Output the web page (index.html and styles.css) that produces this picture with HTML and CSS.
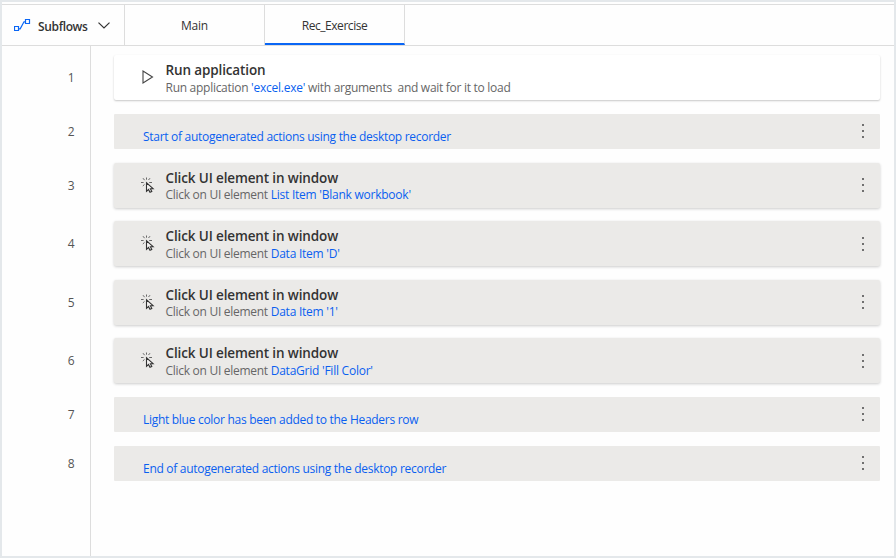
FILE: index.html
```
<!DOCTYPE html>
<html lang="en">
<head>
<meta charset="utf-8">
<title>Subflows</title>
<link rel="stylesheet" href="styles.css">
</head>
<body>
<svg class="defs" aria-hidden="true">
  <symbol id="click" viewBox="0 0 14 16">
    <path d="M5.5 5.8v8.5l2-1.8 1.5 2.8 1.8-.9-1.4-2.7h2.7z" fill="#f5f4f3" stroke="#333" stroke-width="1.1"/>
    <path d="M5.5 0.5v2.2M2 1.2l1.6 2M9 1.2L7.5 3M0 5.5h2.6M8.2 5.5H11M3.5 7.4L1.8 9" fill="none" stroke="#666" stroke-width="1"/>
  </symbol>
</svg>
<div class="window">
  <header class="tabs">
    <div class="subflows">
      <svg class="flow-icon" width="17" height="13" viewBox="0 0 17 13"><g fill="none" stroke="#0a66f5"><path d="M.5 7.5h4v4h-4zM11.5.5h4v4h-4z" stroke-width="1.2"/><path d="M5 9.8h1.2l3.8-7h1.5" stroke-width="1.2"/></g></svg>
      <span>Subflows</span>
      <svg class="chevron" width="12" height="7" viewBox="0 0 12 7"><path d="M.5.6L6 6 11.5.6" fill="none" stroke="#333" stroke-width="1.2"/></svg>
    </div>
    <div class="tab">Main</div>
    <div class="tab active">Rec_Exercise</div>
  </header>
  <main class="flow">
    <div class="numbers">
      <span>1</span><span class="short">2</span><span>3</span><span>4</span><span>5</span><span>6</span><span class="short">7</span><span class="short">8</span>
    </div>
    <div class="actions">
      <section class="card white">
        <svg class="play" width="12" height="14" viewBox="0 0 12 14"><path d="M1 1v12l9.5-6z" fill="none" stroke="#444" stroke-width="1.1"/></svg>
        <div class="copy"><h2>Run application</h2><p>Run application <b>'excel.exe'</b> with arguments&nbsp; and wait for it to load</p></div>
      </section>
      <section class="note"><p>Start of autogenerated actions using the desktop recorder</p><i class="more"></i></section>
      <section class="card"><svg class="click"><use href="#click"/></svg><div class="copy"><h2>Click UI element in window</h2><p>Click on UI element <b>List Item 'Blank workbook'</b></p></div><i class="more"></i></section>
      <section class="card"><svg class="click"><use href="#click"/></svg><div class="copy"><h2>Click UI element in window</h2><p>Click on UI element <b>Data Item 'D'</b></p></div><i class="more"></i></section>
      <section class="card"><svg class="click"><use href="#click"/></svg><div class="copy"><h2>Click UI element in window</h2><p>Click on UI element <b>Data Item '1'</b></p></div><i class="more"></i></section>
      <section class="card"><svg class="click"><use href="#click"/></svg><div class="copy"><h2>Click UI element in window</h2><p>Click on UI element <b>DataGrid 'Fill Color'</b></p></div><i class="more"></i></section>
      <section class="note"><p>Light blue color has been added to the Headers row</p><i class="more"></i></section>
      <section class="note"><p>End of autogenerated actions using the desktop recorder</p><i class="more"></i></section>
    </div>
  </main>
</div>
</body>
</html>
```
FILE: styles.css
```
* { box-sizing: border-box; margin: 0; padding: 0; }
body { font-family: "Open Sans", "Noto Sans", sans-serif; font-size: 12px; color: #333; }
.defs { display: none; }
.window { width: 896px; height: 558px; border: 2px solid #e4e8eb; background: #fefefe; padding-top: 2px; display: flex; flex-direction: column; }
.tabs { height: 42px; flex: none; display: flex; border-top: 1px solid #ddd; border-bottom: 1px solid #ddd; }
.subflows { width: 123px; display: flex; align-items: center; padding-left: 12px; border-right: 1px solid #ddd; font-weight: 600; letter-spacing: -0.35px; }
.subflows span { width: 60px; margin-left: 7px; white-space: nowrap; padding-top: 2px; }
.chevron { margin-top: 1px; }
.tab { width: 140px; display: flex; align-items: center; justify-content: center; border-right: 1px solid #ddd; padding-top: 1px; letter-spacing: -0.2px; }
.tab.active { border-bottom: 2px solid #0a66f5; padding-top: 3px; letter-spacing: -0.45px; }
.flow { flex: 1; display: flex; }
.numbers { width: 89px; border-right: 1px solid #ddd; display: flex; flex-direction: column; padding: 9px 15.5px 0 0; color: #555; }
.numbers span { height: 45px; margin-bottom: 13.5px; display: flex; align-items: center; justify-content: flex-end; }
.numbers .short { height: 35px; margin-bottom: 14px; }
.actions { padding: 9px 0 0 23px; width: 789px; }
.card { height: 45px; margin-bottom: 13.5px; background: #ebeae8; border-radius: 2px; box-shadow: 0 1px 3px rgba(0,0,0,.2); display: flex; align-items: center; padding-left: 27px; }
.card.white { background: #fff; padding-left: 28px; box-shadow: 0 1px 2px rgba(0,0,0,.22); }
.play { margin: 0 11.5px 2px 0; }
.click { width: 14px; height: 16px; margin: 0 10.5px 1px 0; }
.copy { flex: 1; white-space: nowrap; padding-top: 2px; }
h2 { font-size: 13.5px; font-weight: 600; line-height: 18px; letter-spacing: -0.13px; color: #333; }
.copy p { font-size: 12px; line-height: 17px; margin-top: -0.75px; color: #666; letter-spacing: -0.28px; }
.copy b { letter-spacing: -0.24px; }
b { font-weight: 400; color: #0a5ff0; }
.note { height: 35px; margin-bottom: 14px; background: #ebeae8; border-radius: 1px; display: flex; align-items: center; padding-left: 29px; }
.note p { flex: 1; color: #0a5ff0; padding-top: 11px; letter-spacing: -0.29px; }
.more { width: 2px; height: 14px; margin-right: 16px; background: linear-gradient(#707070 2px, transparent 2px) 0 0 / 2px 6px; }
```
